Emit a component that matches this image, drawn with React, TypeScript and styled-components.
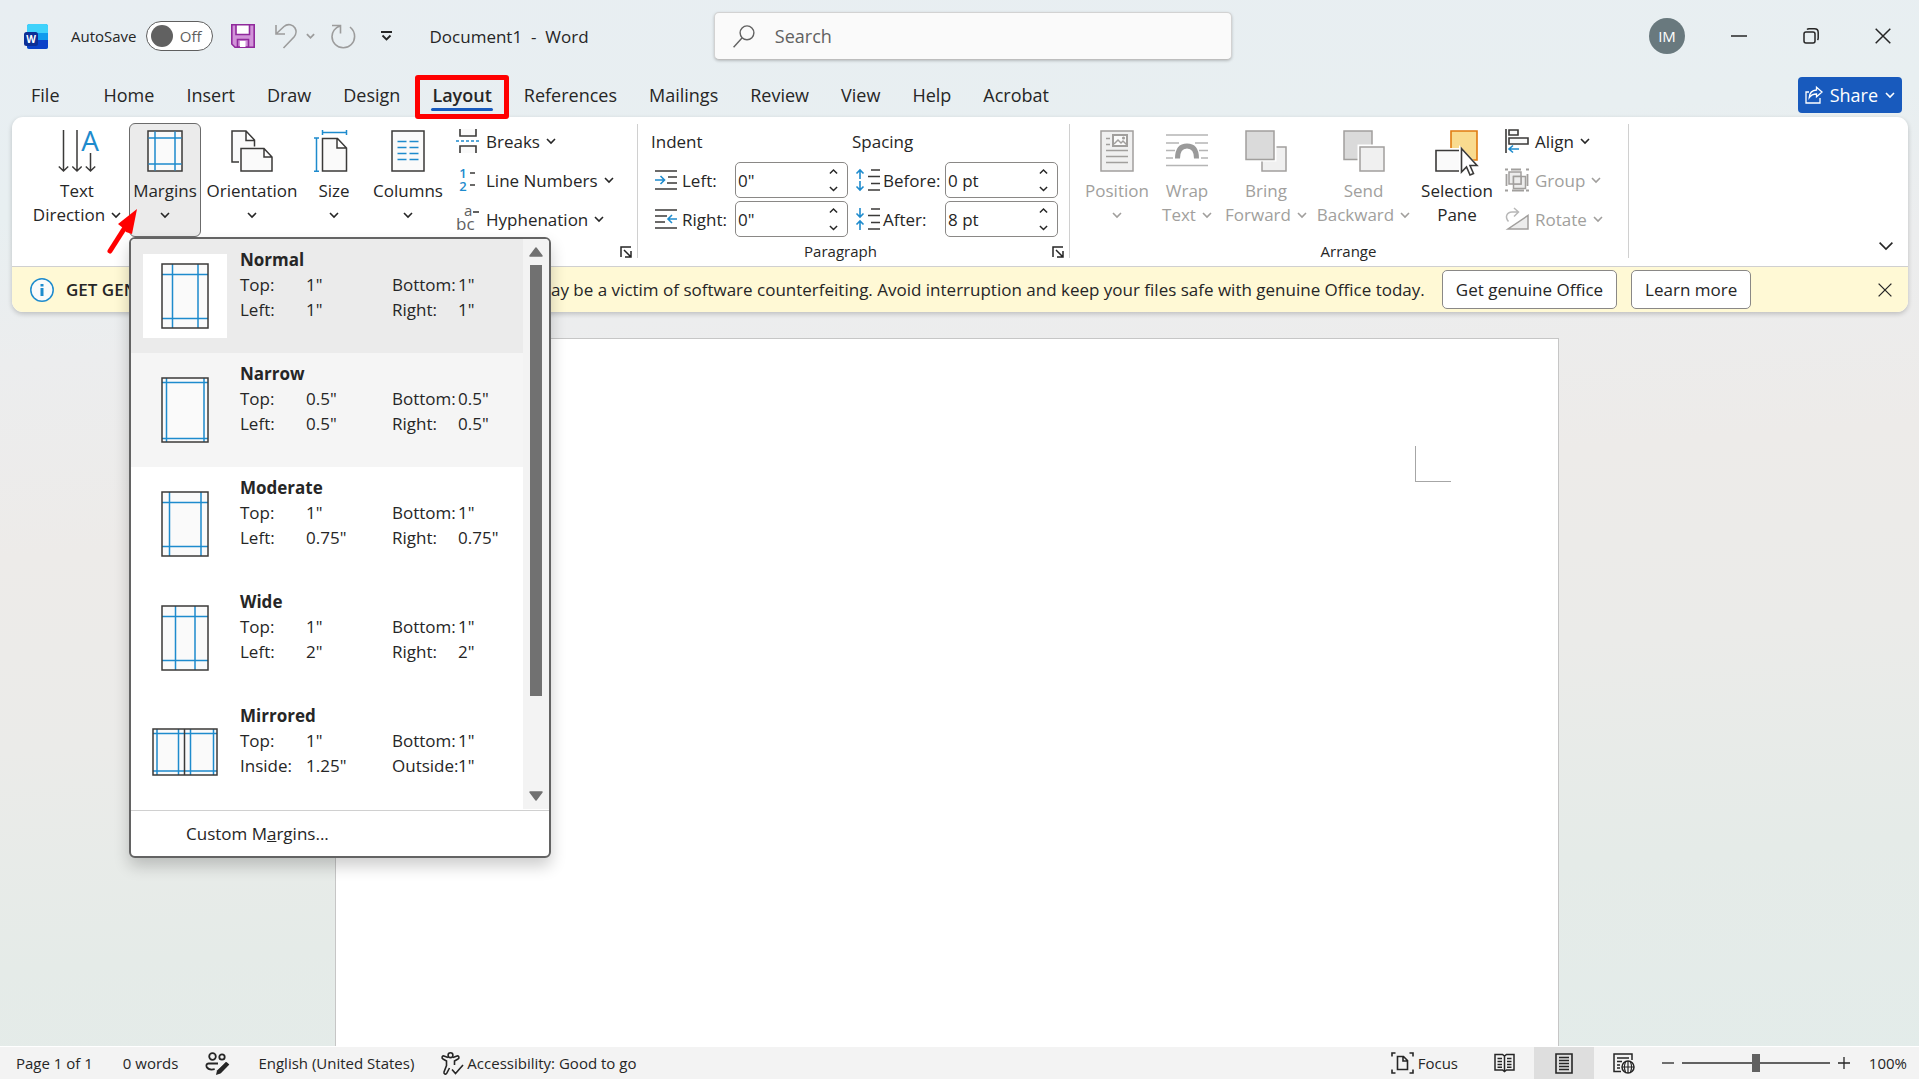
import React from 'react';
import styled, { createGlobalStyle, css } from 'styled-components';

const ink = '#262626';
const stroke = '#3b3a39';
const blue = '#1e8bcd';
const dim = '#a19f9d';

const GlobalStyle = createGlobalStyle`
  *, *::before, *::after { box-sizing: border-box; }
  body { margin: 0; font-family: "Open Sans", "Noto Sans", sans-serif; font-size: 17px; color: ${ink}; }
  button, input { font: inherit; color: inherit; }
  button { border: 0; padding: 0; margin: 0; background: none; cursor: pointer; white-space: nowrap; }
  svg { display: block; flex: none; overflow: visible; }
`;

const Window = styled.div`
  min-height: 100vh;
  display: flex;
  flex-direction: column;
  background: linear-gradient(176deg, #e8eef2 0%, #e8eff1 18%, #ecedee 30%, #edebe9 46%, #ebebe9 62%, #e5ebe8 80%, #e3ecea 100%);
`;

/* ---------- title bar ---------- */

const TitleBar = styled.header`
  height: 72px;
  display: grid;
  grid-template-columns: 37.2% 27% 1fr;
  align-items: center;
`;
const TitleLeft = styled.div`
  display: flex;
  align-items: center;
  padding-left: 24px;
`;
const AutoSave = styled.label`
  display: flex;
  align-items: center;
  gap: 9px;
  margin-left: 23px;
  font-size: 15px;
`;
const Toggle = styled.span`
  position: relative;
  width: 67px;
  height: 30px;
  display: flex;
  align-items: center;
  justify-content: flex-end;
  padding-right: 10px;
  border: 1px solid #5f5f5f;
  border-radius: 15px;
  background: #fff;
  color: #5f5f5f;
  &::before {
    content: '';
    position: absolute;
    left: 4px;
    width: 22px;
    height: 22px;
    border-radius: 50%;
    background: #616161;
  }
`;
const HiddenCheck = styled.input`
  position: absolute;
  inset: 0;
  margin: 0;
  opacity: 0;
`;
const QuickTools = styled.div`
  display: flex;
  align-items: center;
  margin-left: 18px;
`;
const QuickButton = styled.button<{ $gap?: number }>`
  display: flex;
  align-items: center;
  margin-right: ${p => p.$gap ?? 0}px;
`;
const DocTitle = styled.h1`
  margin: 0 0 0 38px;
  font-size: 17px;
  font-weight: 400;
  white-space: pre;
`;
const SearchBox = styled.label`
  height: 48px;
  display: flex;
  align-items: center;
  gap: 18px;
  padding: 0 18px;
  border: 1px solid #d2d2d2;
  border-bottom-color: #bdbdbd;
  border-radius: 5px;
  background: #fafafa;
  box-shadow: 0 1px 3px rgba(0, 0, 0, 0.22);
`;
const SearchInput = styled.input`
  flex: 1;
  min-width: 0;
  border: 0;
  outline: 0;
  background: none;
  font-size: 18px;
  &::placeholder { color: #616161; opacity: 1; }
`;
const WindowControls = styled.div`
  display: flex;
  align-items: center;
  justify-content: flex-end;
`;
const Avatar = styled.button`
  width: 36px;
  height: 36px;
  margin-right: 18px;
  border-radius: 50%;
  background: #69797e;
  color: #fff;
  font-size: 15px;
`;
const ControlButton = styled.button`
  width: 72px;
  height: 48px;
  display: grid;
  place-items: center;
`;

/* ---------- tabs ---------- */

const TabRow = styled.nav`
  position: relative;
  z-index: 3;
  height: 45px;
  display: flex;
  align-items: center;
  padding: 0 17px 0 15px;
`;
const Tab = styled.button<{ $active?: boolean; $wide?: boolean }>`
  position: relative;
  padding: 0 16px;
  margin-right: ${p => (p.$wide ? 12 : 0)}px;
  font-size: 18px;
  line-height: 28px;
  ${p => p.$active && css`
    font-weight: 600;
    &::after {
      content: '';
      position: absolute;
      left: 15px;
      right: 15px;
      bottom: -2px;
      height: 3px;
      border-radius: 2px;
      background: #185abd;
    }
  `}
`;
const Highlight = styled.span`
  position: absolute;
  inset: -6px -1px -10px;
  border: 5px solid #ff0000;
  border-radius: 3px;
`;
const ShareButton = styled.button`
  height: 36px;
  margin-left: auto;
  padding: 0 7px;
  display: flex;
  align-items: center;
  gap: 7px;
  border-radius: 4px;
  background: #185abd;
  color: #fff;
  font-size: 18px;
`;

/* ---------- ribbon ---------- */

const Panel = styled.div`
  position: relative;
  z-index: 2;
  margin: 0 11px 0 12px;
  border-radius: 11px;
  background: #fff;
  box-shadow: 0 2px 5px rgba(0, 0, 0, 0.2);
`;
const Ribbon = styled.div`
  display: flex;
  padding-top: 6px;
  border-bottom: 1px solid #d0d0d0;
`;
const Group = styled.section<{ $left: number; $right: number }>`
  position: relative;
  display: flex;
  flex-direction: column;
  padding: 0 ${p => p.$right}px 0 ${p => p.$left}px;
  &::after {
    content: '';
    position: absolute;
    top: 1px;
    right: 0;
    bottom: 8px;
    width: 1px;
    background: #d0d0d0;
  }
`;
const GroupBody = styled.div`
  display: flex;
  gap: 4px;
  height: 114px;
`;
const GroupFooter = styled.div<{ $inset?: number }>`
  position: relative;
  height: 29px;
  padding-right: ${p => p.$inset ?? 0}px;
  line-height: 29px;
  text-align: center;
  font-size: 15px;
`;
const Launcher = styled.button<{ $right: number }>`
  position: absolute;
  right: ${p => p.$right}px;
  top: 9px;
`;
const Anchor = styled.div`
  position: relative;
  display: flex;
`;
const BigButton = styled.button<{ $width: number; $open?: boolean; $dim?: boolean }>`
  width: ${p => p.$width}px;
  display: flex;
  flex-direction: column;
  align-items: center;
  gap: 7px;
  padding-top: 6px;
  border: 1px solid ${p => (p.$open ? '#6b6b6b' : 'transparent')};
  border-radius: 6px;
  background: ${p => (p.$open ? '#ebebeb' : 'none')};
  line-height: 24px;
  color: ${p => (p.$dim ? dim : ink)};
`;
const LabelLine = styled.span`
  height: 24px;
  display: flex;
  align-items: center;
  justify-content: center;
  gap: 6px;
`;
const SmallColumn = styled.div<{ $width: number }>`
  width: ${p => p.$width}px;
  display: flex;
  flex-direction: column;
  gap: 3px;
`;
const SmallButton = styled.button<{ $dim?: boolean }>`
  height: 36px;
  display: flex;
  align-items: center;
  gap: 6px;
  padding-left: 5px;
  color: ${p => (p.$dim ? dim : ink)};
`;
const ParagraphGrid = styled.div`
  display: grid;
  grid-template-columns: 84px 117px 93px 113px;
  grid-auto-rows: 36px;
  row-gap: 3px;
  align-items: center;
`;
const FieldHeading = styled.span`
  grid-column: span 2;
`;
const FieldLabel = styled.label`
  display: flex;
  align-items: center;
  gap: 3px;
  padding-left: 4px;
`;
const Spinner = styled.div`
  width: 113px;
  height: 36px;
  display: flex;
  border: 1px solid #8a8886;
  border-radius: 5px;
  background: #fff;
`;
const SpinnerInput = styled.input`
  flex: 1;
  min-width: 0;
  padding: 0 0 0 2px;
  border: 0;
  outline: 0;
  background: none;
`;
const SpinnerArrows = styled.div`
  width: 28px;
  display: grid;
  grid-template-rows: 1fr 1fr;
`;
const ArrowButton = styled.button`
  display: grid;
  place-items: center;
`;
const CollapseButton = styled.button`
  margin: auto 14px 15px auto;
`;

/* ---------- message bar ---------- */

const MessageBar = styled.div`
  height: 45px;
  display: flex;
  align-items: center;
  padding: 0 16px 0 18px;
  border-radius: 0 0 11px 11px;
  background: #fff9d5;
  white-space: nowrap;
`;
const MessageTitle = styled.strong`
  margin: 0 18px 0 12px;
  font-weight: 600;
`;
const MessageText = styled.span`
  margin-right: 17px;
`;
const MessageButton = styled.button`
  height: 39px;
  margin-right: 14px;
  padding: 0 13px;
  border: 1px solid #8a8886;
  border-radius: 5px;
  background: #fff;
`;
const MessageClose = styled.button`
  margin-left: auto;
`;

/* ---------- margins menu ---------- */

const Menu = styled.div`
  position: absolute;
  z-index: 5;
  top: 100%;
  left: 0;
  width: 422px;
  border: 2px solid #636363;
  border-radius: 6px;
  background: #fff;
  overflow: hidden;
  box-shadow: 0 8px 16px rgba(0, 0, 0, 0.2);
`;
const MenuScroll = styled.div`
  display: flex;
  padding-bottom: 1px;
  border-bottom: 1px solid #d0d0d0;
`;
const MenuList = styled.div`
  flex: 1;
`;
const MenuItem = styled.button<{ $state?: 'selected' | 'hover' }>`
  width: 100%;
  height: 114px;
  display: flex;
  gap: 13px;
  padding: 8px 0 0 12px;
  text-align: left;
  line-height: 25px;
  background: ${p => (p.$state === 'selected' ? '#ebebeb' : p.$state === 'hover' ? '#f5f5f5' : '#fff')};
`;
const Thumb = styled.span<{ $selected?: boolean }>`
  width: 84px;
  height: 84px;
  margin-top: 7px;
  display: grid;
  place-items: center;
  background: ${p => (p.$selected ? '#fff' : 'none')};
`;
const ItemText = styled.span`
  display: grid;
  grid-template-columns: 66px 86px 66px auto;
  align-content: start;
`;
const ItemName = styled.strong`
  grid-column: 1 / -1;
  font-weight: 700;
`;
const ScrollTrack = styled.div`
  width: 26px;
  display: flex;
  flex-direction: column;
  align-items: center;
  justify-content: space-between;
  padding: 8px 0;
  background: #f3f3f3;
`;
const ScrollThumb = styled.div`
  flex: 0 0 431px;
  width: 12px;
  margin: 8px 0 auto;
  background: #717171;
`;
const CustomItem = styled.button`
  width: 100%;
  height: 45px;
  padding: 0 0 0 55px;
  text-align: left;
`;
const Pointer = styled.svg`
  position: absolute;
  z-index: 6;
  left: -25px;
  bottom: -18px;
`;

/* ---------- document ---------- */

const Workspace = styled.main`
  flex: 1;
  display: flex;
  justify-content: center;
  padding: 26px 25px 0 0;
`;
const Sheet = styled.div`
  width: 1224px;
  display: flex;
  justify-content: flex-end;
  padding: 107px 107px 0 0;
  border: 1px solid #c6c6c6;
  border-bottom: 0;
  background: #fff;
`;
const CornerMark = styled.div`
  width: 36px;
  height: 36px;
  border-left: 1px solid #a6a6a6;
  border-bottom: 1px solid #a6a6a6;
`;

/* ---------- status bar ---------- */

const StatusBar = styled.footer`
  height: 33px;
  display: flex;
  align-items: center;
  justify-content: space-between;
  padding: 0 12px 0 16px;
  border-top: 1px solid #fff;
  background: #f3f3f3;
  font-size: 15px;
`;
const StatusSide = styled.div`
  display: flex;
  align-items: center;
  align-self: stretch;
`;
const StatusButton = styled.button<{ $gap?: number }>`
  display: flex;
  align-items: center;
  gap: 4px;
  margin-right: ${p => p.$gap ?? 0}px;
`;
const ViewButton = styled.button<{ $active?: boolean }>`
  width: 60px;
  align-self: stretch;
  display: grid;
  place-items: center;
  background: ${p => (p.$active ? '#dedede' : 'none')};
`;
const Zoom = styled.input`
  appearance: none;
  width: 148px;
  height: 20px;
  margin: 0 8px;
  background: linear-gradient(#616161, #616161) center / 100% 2px no-repeat;
  &::-webkit-slider-thumb {
    appearance: none;
    width: 8px;
    height: 18px;
    background: #616161;
  }
`;
const ZoomValue = styled.span`
  width: 57px;
  text-align: right;
`;

/* ---------- icons ---------- */

const Chevron = ({ size = 10, up = false, width = 1.6 }: { size?: number; up?: boolean; width?: number }) => (
  <svg width={size} height={size * 0.6} viewBox="0 0 10 6" fill="none" stroke="currentColor" strokeWidth={width}>
    <path d={up ? 'M1 5 5 1l4 4' : 'M1 1l4 4 4-4'} />
  </svg>
);
const WordLogo = () => (
  <svg width="24" height="25" viewBox="0 0 24 25">
    <rect x="3" y="0" width="21" height="25" rx="2.5" fill="#0f9bee" />
    <path d="M5.500 0h16A2.500 2.500 0 0 1 24 2.500V9H3V2.500A2.500 2.500 0 0 1 5.500 0z" fill="#3fd2fb" />
    <path d="M3 16h21v6.500a2.500 2.500 0 0 1-2.500 2.500h-16A2.500 2.500 0 0 1 3 22.500z" fill="#0a41c9" />
    <rect x="0" y="8" width="14" height="14" rx="2.500" fill="#0c2f96" />
    <text x="7" y="18.500" textAnchor="middle" fontSize="10" fontWeight="700" fill="#fff" fontFamily="Open Sans">W</text>
  </svg>
);
const SaveIcon = () => (
  <svg width="24" height="24" viewBox="0 0 24 24" fill="#d193d9" stroke="#902a9c" strokeWidth="1.600">
    <path d="M.8.8h22.400v22.400H4L.8 20z" />
    <path d="M5 .8h13.500v9.700H5z" fill="#fff" />
    <path d="M6.500 23v-7.500h11V23z" />
    <path d="M9 23v-6h5.500v6z" fill="#fff" stroke="none" />
  </svg>
);
const UndoIcon = () => (
  <svg width="22" height="25" viewBox="0 0 22 25" fill="none" stroke="#9c9c9c" strokeWidth="1.600">
    <path d="M1 1v9h9M1.500 9.500 9 2.500c4-3.500 9-1.500 11 1.500 2 3.500 1 6.500-1 9L8.500 24" />
  </svg>
);
const RedoIcon = () => (
  <svg width="25" height="25" viewBox="0 0 25 25" fill="none" stroke="#9c9c9c" strokeWidth="1.600">
    <path d="M1 1.500h8.500v8M9 2C4 3.500 1 8 1 12.500a11.300 11.300 0 1 0 22.600 0c0-4-1.600-7-4.600-9.500" />
  </svg>
);
const CustomizeIcon = () => (
  <svg width="11" height="10" viewBox="0 0 11 10" fill="none" stroke={ink} strokeWidth="1.800">
    <path d="M0 1h11M1.500 4.500l4 4 4-4" />
  </svg>
);
const SearchIcon = () => (
  <svg width="22" height="23" viewBox="0 0 22 23" fill="none" stroke="#616161" strokeWidth="1.400">
    <circle cx="14" cy="7.800" r="6.900" />
    <path d="M9.200 12.800.6 22.300" />
  </svg>
);
const ShareIcon = () => (
  <svg width="18" height="18" viewBox="0 0 18 18" fill="none" stroke="#fff" strokeWidth="1.300">
    <path d="M4 6H1v11h14v-5" />
    <path d="M11.500 1.200 17 6l-5.500 4.800V8C8 8 6 9 4.200 11.700 4.500 7 7.500 4.200 11.500 4z" />
  </svg>
);

const TextDirectionIcon = () => (
  <svg width="38" height="42" viewBox="0 0 38 42" fill="none" stroke={stroke} strokeWidth="1.500">
    <path d="M5.500 0v41M.8 36.500l4.700 4.500 4.700-4.500M19 0v41M14.300 36.500 19 41l4.700-4.500M32.500 23v18M27.800 36.500l4.700 4.500 4.700-4.500" />
    <text x="32" y="21" textAnchor="middle" fontSize="28" fill={blue} stroke="none" fontFamily="Open Sans">A</text>
  </svg>
);
const MarginsIcon = () => (
  <svg width="36" height="42" viewBox="0 0 36 42" fill="none" strokeWidth="1.500">
    <path d="M1 1h34v40H1z" fill="#fafafa" stroke={stroke} />
    <path d="M8 1.500v39M28 1.500v39M1.500 8h33M1.500 34h33" stroke={blue} />
  </svg>
);
const OrientationIcon = () => (
  <svg width="42" height="42" viewBox="0 0 42 42" fill="#fafafa" stroke={stroke} strokeWidth="1.500">
    <path d="M8 32H1V1h14l8.500 9v6.500M15 1v9.500h8.500" />
    <path d="M10 18.500h23l8 8.500v14H10zM33 18.500V27h8" />
  </svg>
);
const SizeIcon = () => (
  <svg width="40" height="42" viewBox="0 0 40 42" fill="none" strokeWidth="1.500">
    <path d="M8.500 8.500h15l9 9.500v23h-24zM23 8.500V18h9.500" fill="#fafafa" stroke={stroke} />
    <path d="M8.500 2.500h24M8.500 0v5M32.500 0v5M2.500 8v33.500M0 8h5M0 41.200h5" stroke={blue} />
  </svg>
);
const ColumnsIcon = () => (
  <svg width="34" height="42" viewBox="0 0 34 42" fill="none" strokeWidth="1.500">
    <path d="M1 1h32v40H1z" fill="#fafafa" stroke={stroke} />
    <path d="M6.500 11.500h9M18.500 11.500h9M6.500 17.500h9M18.500 17.500h9M6.500 23.500h9M18.500 23.500h9M6.500 29.500h9M18.500 29.500h9" stroke={blue} />
  </svg>
);
const BreaksIcon = () => (
  <svg width="24" height="24" viewBox="0 0 24 24" fill="none" strokeWidth="1.600">
    <path d="M4 0v7h16V0M4 24v-7h16v7" fill="#fafafa" stroke={stroke} />
    <path d="M0 12h23" stroke={blue} strokeDasharray="3 2" />
  </svg>
);
const LineNumbersIcon = () => (
  <svg width="24" height="24" viewBox="0 0 24 24">
    <text x="7" y="10" textAnchor="middle" fontSize="13" fontWeight="600" fill={blue} fontFamily="Open Sans">1</text>
    <text x="7" y="23" textAnchor="middle" fontSize="13" fontWeight="600" fill={blue} fontFamily="Open Sans">2</text>
    <path d="M14 5h5M14 17h5" stroke={stroke} strokeWidth="1.600" />
  </svg>
);
const HyphenationIcon = () => (
  <svg width="24" height="26" viewBox="0 0 24 26">
    <text x="0" y="24" fontSize="17" fill="#616161" fontFamily="Open Sans">bc</text>
    <text x="8" y="10" fontSize="15" fill="#616161" fontFamily="Open Sans">a</text>
    <path d="M17 6h6" stroke={stroke} strokeWidth="1.600" />
  </svg>
);
const IndentIcon = ({ right = false }: { right?: boolean }) => (
  <svg width="24" height="20" viewBox="0 0 24 20" fill="none" strokeWidth="1.600">
    <path d={right ? 'M0 1h22M0 7h12M0 13h10M0 19h22' : 'M0 1h22M13 7h9M12 13h10M0 19h22'} stroke={stroke} />
    <path d={right ? 'M22 10h-9M17 6l-4 4 4 4' : 'M0 10h9M5.500 6l4 4-4 4'} stroke={blue} />
  </svg>
);
const SpacingIcon = ({ after = false }: { after?: boolean }) => (
  <svg width="24" height="22" viewBox="0 0 24 22" fill="none" strokeWidth="1.600">
    <path d="M15 1h9M12 7.500h12M15 14.500h9M12 21h12" stroke={stroke} />
    <path
      d={after ? 'M4 0v9M.5 5.500 4 9l3.500-3.500M4 22v-9M.5 16.500 4 13l3.500 3.500' : 'M4 10V1M.5 4.500 4 1l3.500 3.500M4 12v9M.5 17.500 4 21l3.500-3.500'}
      stroke={blue}
    />
  </svg>
);
const LauncherIcon = () => (
  <svg width="12" height="12" viewBox="0 0 12 12" fill="none" stroke={ink} strokeWidth="1.500">
    <path d="M1 11V1h10M4 4l6.500 6.500M11 5v6H5" />
  </svg>
);
const PositionIcon = () => (
  <svg width="34" height="42" viewBox="0 0 34 42" fill="none" stroke={dim} strokeWidth="1.500">
    <path d="M1 1h32v40H1z" fill="#f0f0f0" />
    <path d="M13 5h14v11H13z" fill="#fafafa" strokeWidth="2" />
    <path d="m14 14 4-4 3 3 2-2 4 4M6 8.500h4M6 14.500h4M6 20.500h22M6 26.500h22M6 32.500h22" />
    <circle cx="23.500" cy="8" r=".8" />
  </svg>
);
const WrapIcon = () => (
  <svg width="42" height="42" viewBox="0 0 42 42" fill="none" stroke="#b5b5b5" strokeWidth="1.500">
    <path d="M0 5h42M0 13h13M29 13h13M0 20.500h9M33 20.500h9M0 28h7M35 28h7M0 35.500h42" />
    <path d="M11.500 28.500c0-8 3-12.500 9.500-12.500s9.500 4.500 9.500 12.500" stroke="#9a9a9a" strokeWidth="5" />
  </svg>
);
const BringIcon = () => (
  <svg width="42" height="42" viewBox="0 0 42 42" stroke={dim} strokeWidth="1.500">
    <path d="M17 17h24v24H17z" fill="#f0f0f0" />
    <path d="M0 0h31.500v31.500H0z" fill="#fff" stroke="none" />
    <path d="M1 1h28v28.500H1z" fill="#dadada" />
  </svg>
);
const SendIcon = () => (
  <svg width="42" height="42" viewBox="0 0 42 42" stroke={dim} strokeWidth="1.500">
    <path d="M1 1h28v28.500H1z" fill="#dadada" />
    <path d="M14.500 14.500H42V42H14.500z" fill="#fff" stroke="none" />
    <path d="M17 17h24v24H17z" fill="#f0f0f0" />
  </svg>
);
const SelectionIcon = () => (
  <svg width="44" height="42" viewBox="0 0 44 42" strokeWidth="1.600">
    <path d="M16 1h26v29H16z" fill="#f9db8f" stroke="#e07b10" />
    <path d="M0 18h27v23.500H0z" fill="#fff" />
    <path d="M1 20.500h26V41H1z" fill="#fafafa" stroke={stroke} />
    <path d="M24 15v29h14l6-8z" fill="#fff" />
    <path d="M26.500 18.500V42l5-5 3.500 8 3.500-1.500-3.500-8h7z" fill="#fff" stroke={stroke} strokeWidth="1.600" />
  </svg>
);
const AlignIcon = () => (
  <svg width="24" height="24" viewBox="0 0 24 24" fill="#fafafa" stroke={stroke} strokeWidth="1.600">
    <path d="M1 0v24M4 1h9v5H4zM4 9h19v6H4z" />
    <path d="M14 20H4M8 16.500 4 20l4 3.500" stroke={blue} fill="none" />
  </svg>
);
const GroupIcon = () => (
  <svg width="24" height="24" viewBox="0 0 24 24" fill="#ececec" stroke={dim} strokeWidth="1.500">
    <path d="M4 4h12v12H4zM8.500 8.500h12v12h-12z" />
    <path d="M8.500 8.500H16V16H8.500z" />
    <path d="M0 1.500h3M6 1.500h10M21 1.500h3M0 22.500h3M7 22.500h12M21 22.500h3M1.500 6v12M22.500 6v12" strokeWidth="1.800" fill="none" />
  </svg>
);
const RotateIcon = () => (
  <svg width="24" height="22" viewBox="0 0 24 22" fill="none" stroke={dim} strokeWidth="1.500">
    <path d="M23 7.500V21H3z" fill="#ececec" />
    <path d="M3.500 13.500C-.5 9 2 4 7 4h6M9 0l4.500 4L9 8.500" stroke="#b8b8b8" />
  </svg>
);
const InfoIcon = () => (
  <svg width="24" height="24" viewBox="0 0 24 24" fill="none" stroke={blue}>
    <circle cx="12" cy="12" r="11.200" strokeWidth="1.500" fill="#fafafa" />
    <path d="M12 10v8M12 6v2.500" strokeWidth="3" />
  </svg>
);
const CloseIcon = ({ size = 16 }: { size?: number }) => (
  <svg width={size} height={size} viewBox="0 0 16 16" stroke={ink} strokeWidth="1.500">
    <path d="m.7.7 14.600 14.600M15.300.7.7 15.300" />
  </svg>
);

const StatusEditIcon = () => (
  <svg width="25" height="23" viewBox="0 0 25 23" fill="none" stroke={ink} strokeWidth="1.800">
    <circle cx="7.500" cy="4.500" r="3.300" />
    <circle cx="17" cy="5" r="2.700" />
    <path d="M13 11.500H3.500c-2 0-2.500 2-1.800 3.500 1 2 4 3 8 2.200" />
    <path d="m21.500 10 2.800 2.500-8.800 9-4.500 1.500 1-4.500z" fill={ink} stroke="none" />
    <path d="m22.200 11.300-7.700 8.200" strokeWidth="4" />
  </svg>
);
const AccessibilityIcon = () => (
  <svg width="22" height="23" viewBox="0 0 22 23" fill="none" stroke={ink} strokeWidth="1.600">
    <circle cx="9.500" cy="3.200" r="2.400" />
    <path d="M7 5.500 3 4C1 3.500.3 6 2 7l3.500 2v4.500L3 20c-.5 2 1.800 3 2.800 1.200L8.500 16M12 5.500 16 4c2-.5 2.700 2 1 3l-3.500 2v4M11 17.500l3.500 4L22 13" />
  </svg>
);
const FocusIcon = () => (
  <svg width="23" height="22" viewBox="0 0 23 22" fill="none" stroke={ink} strokeWidth="1.600">
    <path d="M4.500 1H1v3.500M18.500 1H22v3.500M1 17.500V21h3.500M22 17.500V21h-3.500M6.500 4.500h6l4 4v9h-10zM12 4.500v4.500h4.500" />
  </svg>
);
const ReadIcon = () => (
  <svg width="21" height="20" viewBox="0 0 21 20" fill="none" stroke={ink} strokeWidth="1.500">
    <path d="M1 1.500h7.500l2 1.500 2-1.500H20V17h-7.500l-2 1.500-2-1.500H1zM10.500 3v16M3.500 5.500H8M3.500 8.500H8M3.500 11.500H8M3.500 14.200H8M13 5.500h4.500M13 8.500h4.500M13 11.500h4.500M13 14.200h4.500" />
  </svg>
);
const PrintIcon = () => (
  <svg width="18" height="21" viewBox="0 0 18 21" fill="none" stroke={ink} strokeWidth="1.600">
    <path d="M1 1h16v19H1zM4 4.500h10M4 7.500h10M4 10.500h10M4 13.500h10M4 16.500h10" />
  </svg>
);
const WebIcon = () => (
  <svg width="22" height="21" viewBox="0 0 22 21" fill="none" stroke={ink} strokeWidth="1.500">
    <path d="M8 18.500H1V1h18v6M4 5h12M4 8.500h5M4 12h3M4 15h3" />
    <circle cx="15" cy="14" r="6" fill="#f3f3f3" />
    <path d="M9 14h12M15 8v12M12.500 9c-1.300 3-1.300 7 0 10M17.500 9c1.300 3 1.300 7 0 10" strokeWidth="1.200" />
  </svg>
);

/* ---------- data ---------- */

type Preset = {
  name: string;
  rows: [string, string, string, string][];
  guides: string;
  spread?: boolean;
};

const presets: Preset[] = [
  { name: 'Normal', rows: [['Top:', '1"', 'Bottom:', '1"'], ['Left:', '1"', 'Right:', '1"']], guides: 'M11.500 1v64M37 1v64M1 11.500h46M1 55.500h46' },
  { name: 'Narrow', rows: [['Top:', '0.5"', 'Bottom:', '0.5"'], ['Left:', '0.5"', 'Right:', '0.5"']], guides: 'M5.500 1v64M43 1v64M1 5.500h46M1 61.500h46' },
  { name: 'Moderate', rows: [['Top:', '1"', 'Bottom:', '1"'], ['Left:', '0.75"', 'Right:', '0.75"']], guides: 'M8.500 1v64M40 1v64M1 11.500h46M1 55.500h46' },
  { name: 'Wide', rows: [['Top:', '1"', 'Bottom:', '1"'], ['Left:', '2"', 'Right:', '2"']], guides: 'M14.500 1v64M34 1v64M1 11.500h46M1 55.500h46' },
  { name: 'Mirrored', rows: [['Top:', '1"', 'Bottom:', '1"'], ['Inside:', '1.25"', 'Outside:', '1"']], guides: 'M5 1v46M26.500 1v46M38.500 1v46M61.500 1v46M1 5.500h64M1 43h64', spread: true },
];

const PresetIcon = ({ guides, spread }: { guides: string; spread?: boolean }) => {
  const w = spread ? 66 : 48;
  const h = spread ? 48 : 66;
  return (
    <svg width={w} height={h} fill="none" strokeWidth="1.500">
      <rect x="1" y="1" width={w - 2} height={h - 2} fill="#fafafa" />
      <path d={guides} stroke={blue} />
      <rect x="1" y="1" width={w - 2} height={h - 2} stroke={stroke} />
      {spread && <path d="M32.500 1v46" stroke={stroke} />}
    </svg>
  );
};

const tabs = ['File', 'Home', 'Insert', 'Draw', 'Design', 'Layout', 'References', 'Mailings', 'Review', 'View', 'Help', 'Acrobat'];

type BigProps = { icon: React.ReactNode; lines: [string, string?]; width: number; menu?: boolean; open?: boolean; dimmed?: boolean };
const Big = ({ icon, lines, width, menu = true, open, dimmed }: BigProps) => (
  <BigButton $width={width} $open={open} $dim={dimmed} disabled={dimmed}>
    {icon}
    <span>
      <LabelLine>{lines[0]}</LabelLine>
      <LabelLine>
        {lines[1]}
        {menu && <Chevron />}
      </LabelLine>
    </span>
  </BigButton>
);

const Small = ({ icon, text, dimmed }: { icon: React.ReactNode; text: string; dimmed?: boolean }) => (
  <SmallButton $dim={dimmed} disabled={dimmed}>
    {icon}
    {text}
    <Chevron />
  </SmallButton>
);

const Field = ({ id, label, value, icon }: { id: string; label: string; value: string; icon: React.ReactNode }) => (
  <>
    <FieldLabel htmlFor={id}>
      {icon}
      {label}
    </FieldLabel>
    <Spinner>
      <SpinnerInput id={id} defaultValue={value} />
      <SpinnerArrows>
        <ArrowButton aria-label={`Increase ${label}`}><Chevron size={9} up /></ArrowButton>
        <ArrowButton aria-label={`Decrease ${label}`}><Chevron size={9} /></ArrowButton>
      </SpinnerArrows>
    </Spinner>
  </>
);

const MarginsMenu = () => (
  <Menu>
    <MenuScroll>
      <MenuList>
        {presets.map((p, i) => (
          <MenuItem key={p.name} $state={i === 0 ? 'selected' : i === 1 ? 'hover' : undefined}>
            <Thumb $selected={i === 0}><PresetIcon guides={p.guides} spread={p.spread} /></Thumb>
            <ItemText>
              <ItemName>{p.name}</ItemName>
              {p.rows.flat().map((cell, n) => <span key={n}>{cell}</span>)}
            </ItemText>
          </MenuItem>
        ))}
      </MenuList>
      <ScrollTrack>
        <svg width="14" height="10" viewBox="0 0 14 10"><path d="M7 1 13 9H1z" fill="#717171" stroke="#717171" strokeWidth="1.500" strokeLinejoin="round" /></svg>
        <ScrollThumb />
        <svg width="14" height="10" viewBox="0 0 14 10"><path d="M7 9 1 1h12z" fill="#717171" stroke="#717171" strokeWidth="1.500" strokeLinejoin="round" /></svg>
      </ScrollTrack>
    </MenuScroll>
    <CustomItem>Custom M<u>a</u>rgins...</CustomItem>
  </Menu>
);

export default function App() {
  return (
    <Window>
      <GlobalStyle />
      <TitleBar>
        <TitleLeft>
          <WordLogo />
          <AutoSave>
            AutoSave
            <Toggle>
              <HiddenCheck type="checkbox" />
              Off
            </Toggle>
          </AutoSave>
          <QuickTools>
            <QuickButton aria-label="Save" $gap={20}><SaveIcon /></QuickButton>
            <QuickButton aria-label="Undo" $gap={9}><UndoIcon /></QuickButton>
            <QuickButton aria-label="Undo history" $gap={16}><svg width="9" height="6" viewBox="0 0 10 6" fill="none" stroke="#9c9c9c" strokeWidth="2"><path d="M1 1l4 4 4-4" /></svg></QuickButton>
            <QuickButton aria-label="Redo" $gap={25}><RedoIcon /></QuickButton>
            <QuickButton aria-label="Customize toolbar"><CustomizeIcon /></QuickButton>
          </QuickTools>
          <DocTitle>{'Document1  -  Word'}</DocTitle>
        </TitleLeft>
        <SearchBox>
          <SearchIcon />
          <SearchInput type="text" placeholder="Search" aria-label="Search" />
        </SearchBox>
        <WindowControls>
          <Avatar>IM</Avatar>
          <ControlButton aria-label="Minimize"><svg width="16" height="2"><path d="M0 1h16" stroke={ink} strokeWidth="1.500" /></svg></ControlButton>
          <ControlButton aria-label="Restore">
            <svg width="16" height="16" viewBox="0 0 16 16" fill="none" stroke={ink} strokeWidth="1.500">
              <rect x="1" y="4" width="11" height="11" rx="2" />
              <path d="M4 1.500C4.500 1 5 .8 6 .8h5.500c2.500 0 3.700 1.200 3.700 3.700V10c0 1-.2 1.500-.7 2" />
            </svg>
          </ControlButton>
          <ControlButton aria-label="Close"><CloseIcon /></ControlButton>
        </WindowControls>
      </TitleBar>

      <TabRow>
        {tabs.map(t => (
          <Tab key={t} $wide={t === 'File'} $active={t === 'Layout'}>
            {t}
            {t === 'Layout' && <Highlight />}
          </Tab>
        ))}
        <ShareButton>
          <ShareIcon />
          Share
          <Chevron />
        </ShareButton>
      </TabRow>

      <Panel>
        <Ribbon>
          <Group $left={17} $right={0}>
            <GroupBody>
              <Big icon={<TextDirectionIcon />} lines={['Text', 'Direction']} width={96} />
              <Anchor>
                <Big icon={<MarginsIcon />} lines={['Margins']} width={72} open />
                <MarginsMenu />
                <Pointer width="36" height="48" viewBox="0 0 36 48">
                  <path d="M6 44 20 22" stroke="#ff0000" strokeWidth="5" strokeLinecap="round" />
                  <path d="M33 2 14 17l5 4 3 4 6 2z" fill="#ff0000" />
                </Pointer>
              </Anchor>
              <Big icon={<OrientationIcon />} lines={['Orientation']} width={94} />
              <Big icon={<SizeIcon />} lines={['Size']} width={62} />
              <Big icon={<ColumnsIcon />} lines={['Columns']} width={78} />
              <SmallColumn $width={187}>
                <Small icon={<BreaksIcon />} text="Breaks" />
                <Small icon={<LineNumbersIcon />} text="Line Numbers" />
                <Small icon={<HyphenationIcon />} text="Hyphenation" />
              </SmallColumn>
            </GroupBody>
            <GroupFooter>
              <Launcher $right={6} aria-label="Page setup options"><LauncherIcon /></Launcher>
            </GroupFooter>
          </Group>

          <Group $left={13} $right={12}>
            <GroupBody>
              <ParagraphGrid>
                <FieldHeading>Indent</FieldHeading>
                <FieldHeading>Spacing</FieldHeading>
                <Field id="indent-left" label="Left:" value={'0"'} icon={<IndentIcon />} />
                <Field id="space-before" label="Before:" value="0 pt" icon={<SpacingIcon />} />
                <Field id="indent-right" label="Right:" value={'0"'} icon={<IndentIcon right />} />
                <Field id="space-after" label="After:" value="8 pt" icon={<SpacingIcon after />} />
              </ParagraphGrid>
            </GroupBody>
            <GroupFooter $inset={28}>
              Paragraph
              <Launcher $right={-6} aria-label="Paragraph options"><LauncherIcon /></Launcher>
            </GroupFooter>
          </Group>

          <Group $left={13} $right={11}>
            <GroupBody>
              <Big icon={<PositionIcon />} lines={['Position']} width={68} dimmed />
              <Big icon={<WrapIcon />} lines={['Wrap', 'Text']} width={64} dimmed />
              <Big icon={<BringIcon />} lines={['Bring', 'Forward']} width={86} dimmed />
              <Big icon={<SendIcon />} lines={['Send', 'Backward']} width={101} dimmed />
              <Big icon={<SelectionIcon />} lines={['Selection', 'Pane']} width={78} menu={false} />
              <SmallColumn $width={118}>
                <Small icon={<AlignIcon />} text="Align" />
                <Small icon={<GroupIcon />} text="Group" dimmed />
                <Small icon={<RotateIcon />} text="Rotate" dimmed />
              </SmallColumn>
            </GroupBody>
            <GroupFooter $inset={4}>Arrange</GroupFooter>
          </Group>
          <CollapseButton aria-label="Collapse ribbon"><Chevron size={16} width={1} /></CollapseButton>
        </Ribbon>

        <MessageBar>
          <InfoIcon />
          <MessageTitle>GET GENUINE OFFICE</MessageTitle>
          <MessageText>
            Your license isn't genuine, and you may be a victim of software counterfeiting. Avoid interruption and keep your files safe with genuine Office today.
          </MessageText>
          <MessageButton>Get genuine Office</MessageButton>
          <MessageButton>Learn more</MessageButton>
          <MessageClose aria-label="Dismiss message"><CloseIcon size={14} /></MessageClose>
        </MessageBar>
      </Panel>

      <Workspace>
        <Sheet><CornerMark /></Sheet>
      </Workspace>

      <StatusBar>
        <StatusSide>
          <StatusButton $gap={30}>Page 1 of 1</StatusButton>
          <StatusButton $gap={27}>0 words</StatusButton>
          <StatusButton $gap={28} aria-label="Spelling check"><StatusEditIcon /></StatusButton>
          <StatusButton $gap={27}>English (United States)</StatusButton>
          <StatusButton><AccessibilityIcon />Accessibility: Good to go</StatusButton>
        </StatusSide>
        <StatusSide>
          <StatusButton $gap={16}><FocusIcon />Focus</StatusButton>
          <ViewButton aria-label="Read mode"><ReadIcon /></ViewButton>
          <ViewButton aria-label="Print layout" $active><PrintIcon /></ViewButton>
          <ViewButton aria-label="Web layout"><WebIcon /></ViewButton>
          <StatusButton aria-label="Zoom out"><svg width="20" height="12"><path d="M8 6h12" stroke={ink} strokeWidth="1.300" /></svg></StatusButton>
          <Zoom type="range" min="0" max="200" defaultValue="100" aria-label="Zoom" />
          <StatusButton aria-label="Zoom in"><svg width="12" height="12"><path d="M0 6h12M6 0v12" stroke={ink} strokeWidth="1.300" /></svg></StatusButton>
          <ZoomValue>100%</ZoomValue>
        </StatusSide>
      </StatusBar>
    </Window>
  );
}
